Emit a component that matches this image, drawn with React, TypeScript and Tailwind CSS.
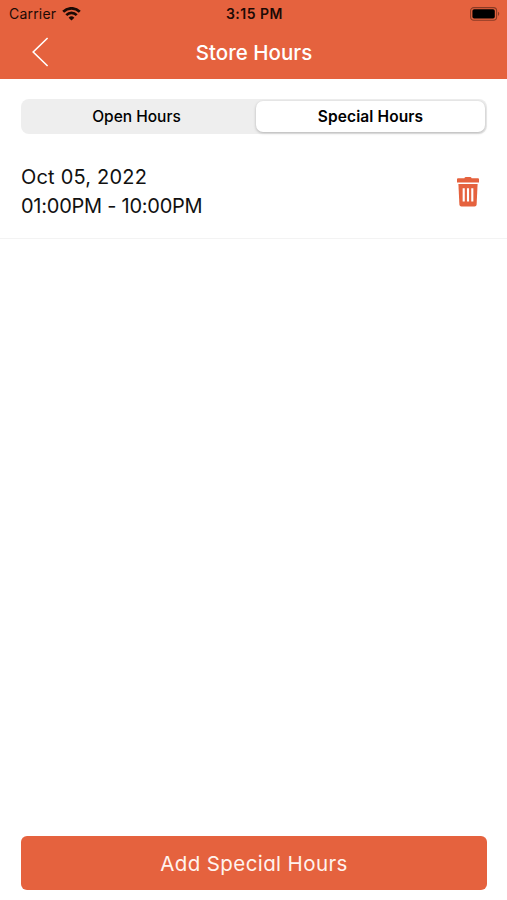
import { useState } from "react";

const tabs = ["Open Hours", "Special Hours"];

const specialHours = [
  { id: 1, date: "Oct 05, 2022", time: "01:00PM - 10:00PM" },
];

function WifiIcon() {
  return (
    <svg width="19" height="14" viewBox="0 0 19 14" fill="none" stroke="#1c0a05" strokeWidth="2.7">
      <path d="M1.2 4.7a11.8 11.8 0 0 1 16.6 0" />
      <path d="M4.3 8.1a7.4 7.4 0 0 1 10.4 0" />
      <path d="M9.5 13.6 6.6 10.7a4.1 4.1 0 0 1 5.8 0z" fill="#1c0a05" stroke="none" />
    </svg>
  );
}

function BatteryIcon() {
  return (
    <svg width="30" height="14" viewBox="0 0 30 14" fill="none">
      <rect x="0.6" y="0.6" width="26" height="12.6" rx="3.2" stroke="#000" strokeOpacity="0.4" strokeWidth="1.1" />
      <rect x="2.4" y="2.3" width="22.4" height="9.2" rx="1.8" fill="#000" />
      <path d="M28 4.8c1.7.7 1.7 3.5 0 4.2z" fill="#000" fillOpacity="0.4" />
    </svg>
  );
}

function TrashIcon() {
  return (
    <svg width="22" height="30" viewBox="0 0 22 30">
      <path
        fill="#e5623e"
        d="M7.4 1.3Q7.6 0 9 0h4q1.4 0 1.6 1.3H21q1 0 1 1V5.4H0V2.3q0-1 1-1z"
      />
      <path fill="#e5623e" d="M1.4 7h19.2l-1 20.8q-.2 1.8-2 1.8H4.4q-1.8 0-2-1.8z" />
      <path stroke="#fff" strokeWidth="2.1" d="M6.7 11.2v13.4M11 11.2v13.4M15.3 11.2v13.4" />
    </svg>
  );
}

export default function App() {
  const [active, setActive] = useState(1);

  return (
    <div className="flex h-[900px] w-full flex-col bg-white font-['Inter',sans-serif]">
      {/* Header */}
      <header className="h-[79px] shrink-0 bg-[#e5623e]">
        <div className="grid h-[27px] grid-cols-3 items-center pl-[9px] pr-[7px] text-[14px] text-[#1c0a05]">
          <div className="flex items-center gap-1.5">
            <span className="tracking-[0.2px]">Carrier</span>
            <WifiIcon />
          </div>
          <span className="text-center font-semibold tracking-[0.5px]">3:15 PM</span>
          <div className="flex justify-end">
            <BatteryIcon />
          </div>
        </div>
        <div className="grid h-[50px] grid-cols-[80px_1fr_80px] items-center">
          <button aria-label="Back" className="pl-8">
            <svg width="17" height="30" viewBox="0 0 17 30" fill="none" stroke="#fff" strokeWidth="1.6">
              <path d="M15.6 1 1.2 15l14.4 14" />
            </svg>
          </button>
          <h1 className="pl-px pt-0.5 text-center text-[20.5px] font-medium text-white">Store Hours</h1>
        </div>
      </header>

      {/* Segmented control */}
      <div className="ml-[21px] mr-5 mt-5 grid h-[35px] shrink-0 grid-cols-[233px_1fr] gap-0.5 rounded-lg bg-[#eeeeee] py-0.5 pr-0.5">
        {tabs.map((tab, i) => (
          <button
            key={tab}
            onClick={() => setActive(i)}
            className={`rounded-[7px] text-[15.5px] text-black ${
              active === i
                ? "bg-white font-semibold tracking-[0.1px] shadow-[0_1px_3px_rgba(0,0,0,0.25)]"
                : "pr-0.5 font-medium"
            }`}
          >
            {tab}
          </button>
        ))}
      </div>

      {/* Entries */}
      <ul className="flex-1">
        {specialHours.map((item) => (
          <li
            key={item.id}
            className="flex h-[105px] items-center justify-between border-b border-[#f3f3f3] pl-[21px] pr-7 pt-[11px]"
          >
            <div className="pt-px text-[20px] leading-[29px] text-[#111111] [font-feature-settings:'cv11']">
              <p className="tracking-[0.2px]">{item.date}</p>
              <p className="tracking-[-0.25px]">{item.time}</p>
            </div>
            <button aria-label="Delete">
              <TrashIcon />
            </button>
          </li>
        ))}
      </ul>

      <button className="mb-2.5 ml-[21px] mr-5 h-[54px] shrink-0 rounded-md bg-[#e5623e] pt-0.5 text-[20.5px] tracking-[0.4px] text-[#fff3ee] [font-feature-settings:'cv11']">
        Add Special Hours
      </button>
    </div>
  );
}
